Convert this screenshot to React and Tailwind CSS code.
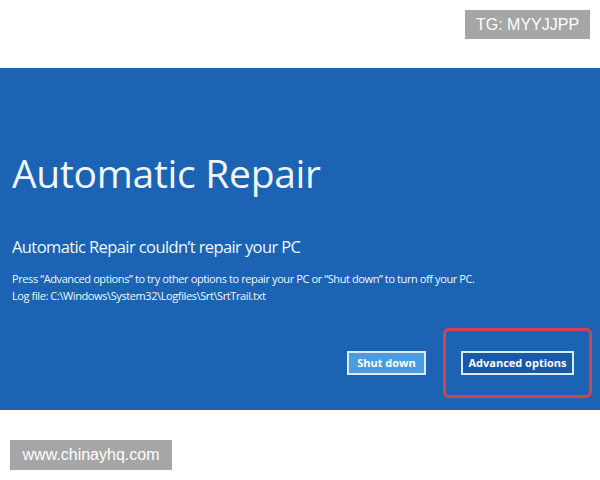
export default function App() {
  const segoe = { fontFamily: '"Open Sans", "Noto Sans", sans-serif' };
  return (
    <div className="w-[600px] h-[480px] bg-white flex flex-col overflow-hidden">
      <div className="h-[68px] flex justify-end pt-[10px] pr-[10px]">
        <div className="h-[29px] w-[125px] bg-[#a6a6a6] text-white text-[16px] flex items-center justify-center font-['Liberation_Sans',sans-serif]">
          TG: MYYJJPP
        </div>
      </div>
      <div className="h-[342px] bg-[#1c64b3] flex flex-col pl-[12px] text-[#eef7fd]" style={segoe}>
        <div className="mt-[81px] text-[39px] leading-[48px] tracking-[-0.3px]">Automatic Repair</div>
        <div className="mt-[39px] text-[16.5px] leading-[22px] tracking-[-0.6px]">Automatic Repair couldn’t repair your PC</div>
        <div className="mt-[12px] text-[11px] leading-[17px] tracking-[-0.4px]">
          Press “Advanced options” to try other options to repair your PC or “Shut down” to turn off your PC.
        </div>
        <div className="text-[11px] leading-[17px] tracking-[-0.4px]">Log file: C:\Windows\System32\Logfiles\Srt\SrtTrail.txt</div>
        <div className="mt-[24px] flex items-center justify-end pr-[8px]">
          <div className="w-[79px] h-[24px] bg-[#4b9be0] border-2 border-[#d6eefa] flex items-center justify-center text-[11px] font-bold text-white">
            Shut down
          </div>
          <div className="ml-[17px] w-[149px] h-[70px] border-[3px] border-[#d4424e] rounded-[6px] flex items-center justify-center">
            <div className="w-[113px] h-[24px] bg-[#1859a8] border-2 border-[#d6eefa] flex items-center justify-center text-[11px] font-bold text-white">
              Advanced options
            </div>
          </div>
        </div>
      </div>
      <div className="pt-[30px] pl-[10px]">
        <div className="h-[30px] w-[162px] bg-[#a6a6a6] text-white text-[16px] flex items-center justify-center font-['Liberation_Sans',sans-serif]">
          www.chinayhq.com
        </div>
      </div>
    </div>
  );
}
